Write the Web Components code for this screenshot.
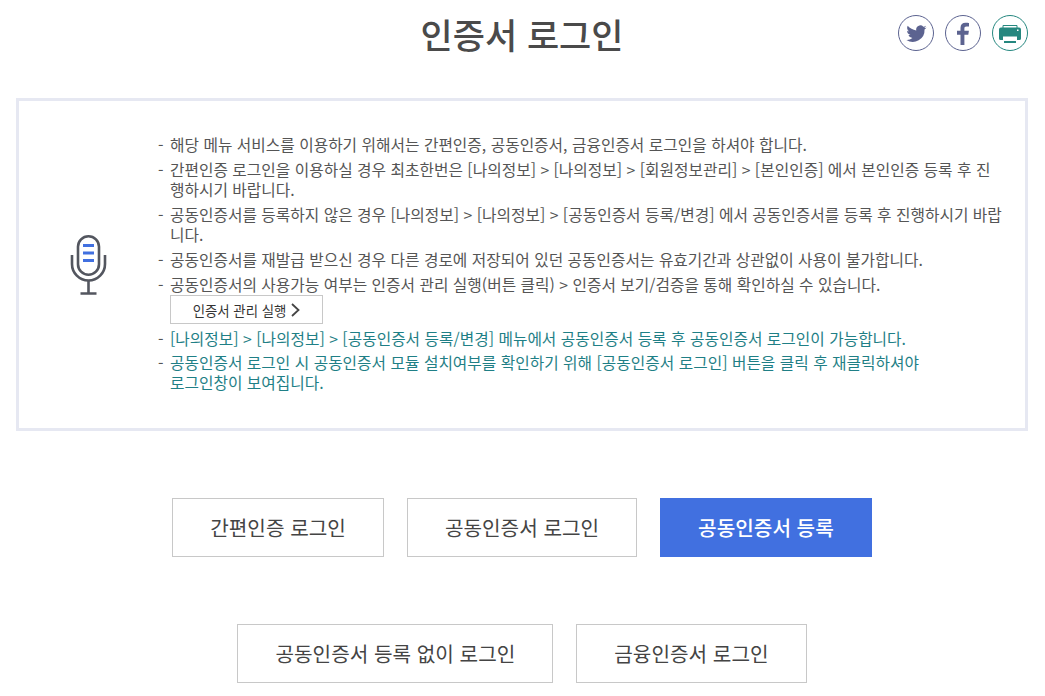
<!DOCTYPE html>
<html lang="ko">
<head>
<meta charset="utf-8">
<title>인증서 로그인</title>
<style>
html, body { margin: 0; padding: 0; background: #fff; overflow: hidden; }
body { font-family: "Noto Sans CJK KR", "Noto Sans", sans-serif; color: #555; }
</style>
</head>
<body>
<login-page>
  <page-header slot="header" title-text="인증서 로그인"></page-header>
  <notice-box slot="notice">
    <notice-item>해당 메뉴 서비스를 이용하기 위해서는 간편인증, 공동인증서, 금융인증서 로그인을 하셔야 합니다.</notice-item>
    <notice-item>간편인증 로그인을 이용하실 경우 최초한번은 [나의정보] &gt; [나의정보] &gt; [회원정보관리] &gt; [본인인증] 에서 본인인증 등록 후 진행하시기 바랍니다.</notice-item>
    <notice-item>공동인증서를 등록하지 않은 경우 [나의정보] &gt; [나의정보] &gt; [공동인증서 등록/변경] 에서 공동인증서를 등록 후 진행하시기 바랍니다.</notice-item>
    <notice-item>공동인증서를 재발급 받으신 경우 다른 경로에 저장되어 있던 공동인증서는 유효기간과 상관없이 사용이 불가합니다.</notice-item>
    <notice-item>공동인증서의 사용가능 여부는 인증서 관리 실행(버튼 클릭) &gt; 인증서 보기/검증을 통해 확인하실 수 있습니다.
      <manage-button>인증서 관리 실행</manage-button>
    </notice-item>
    <notice-item accent>[나의정보] &gt; [나의정보] &gt; [공동인증서 등록/변경] 메뉴에서 공동인증서 등록 후 공동인증서 로그인이 가능합니다.</notice-item>
    <notice-item accent narrow>공동인증서 로그인 시 공동인증서 모듈 설치여부를 확인하기 위해 [공동인증서 로그인] 버튼을 클릭 후 재클릭하셔야 로그인창이 보여집니다.</notice-item>
  </notice-box>
  <action-row slot="actions">
    <action-button>간편인증 로그인</action-button>
    <action-button>공동인증서 로그인</action-button>
    <action-button primary>공동인증서 등록</action-button>
  </action-row>
  <action-row slot="actions">
    <action-button>공동인증서 등록 없이 로그인</action-button>
    <action-button>금융인증서 로그인</action-button>
  </action-row>
</login-page>

<script>
function shadow(el, html) {
    el.attachShadow({ mode: "open" }).innerHTML = html;
}

class LoginPage extends HTMLElement {
    constructor() {
        super();
        shadow(this, `
        <style>
        :host { display: block; width: 1045px; height: 696px; box-sizing: border-box; padding: 0 17px 0 16px; }
        </style>
        <slot name="header"></slot>
        <slot name="notice"></slot>
        <slot name="actions"></slot>
        `);
    }
}

class PageHeader extends HTMLElement {
    constructor() {
        super();
        shadow(this, `
        <style>
        :host { display: block; position: relative; height: 98px; }
        h1 { margin: 0; padding-top: 9px; font-size: 35px; line-height: 50px; font-weight: 500; color: #4a4a4a; text-align: center; }
        .share { position: absolute; top: 15px; right: 0; display: flex; gap: 11px; }
        svg { display: block; width: 36px; height: 36px; }
        </style>
        <h1></h1>
        <div class="share">
          <svg viewBox="0 0 36 36"><circle cx="18" cy="18" r="17.5" fill="#fff" stroke="#5c6390"/>
            <path transform="translate(18.5 18) scale(.86) translate(-18.250 -17)" fill="#5c6390" d="M30 10.500c-.9.4-1.800.7-2.800.8 1-.6 1.800-1.500 2.100-2.700-1 .6-2 1-3.100 1.200a4.800 4.800 0 0 0-8.200 4.400C14 13.500 10.500 11.600 8 8.700c-1.300 2.200-.6 5 1.500 6.400-.8 0-1.500-.2-2.200-.6 0 2.300 1.600 4.300 3.900 4.800-.7.200-1.400.2-2.200.1.600 1.900 2.400 3.300 4.500 3.300A9.700 9.700 0 0 1 6.500 25 13.700 13.700 0 0 0 27.600 12.800c1-.6 1.800-1.400 2.400-2.300z"/></svg>
          <svg viewBox="0 0 36 36"><circle cx="18" cy="18" r="17.500" fill="#fff" stroke="#5c6390"/>
            <path fill="#5c6390" d="M15.500 30V19.800H12v-4.100h3.500v-3c0-3.300 2-5 5-5 1.500 0 3 .2 3.500.3v3.600h-2.500c-1.700 0-2.100.8-2.100 2v2.100h4.500l-.6 4.100h-3.900V30z"/></svg>
          <svg viewBox="0 0 36 36"><circle cx="18" cy="18" r="17.500" fill="#fff" stroke="#25877f"/>
            <path fill="none" stroke="#25877f" stroke-width="1" d="M11 14V10.500h14V14"/>
            <path fill="#25877f" d="M7 14.500a2 2 0 0 1 2-2h18a2 2 0 0 1 2 2v9a1.500 1.500 0 0 1-1.500 1.500H25v-3.500H11V25H8.500A1.500 1.500 0 0 1 7 23.500z"/>
            <path fill="#25877f" d="M12 26h12v2H12z"/>
            <path fill="#fff" d="M25 14.500h1.500V16H25z"/></svg>
        </div>
        `);
        this.shadowRoot.querySelector("h1").textContent = this.getAttribute("title-text");
    }
}

class NoticeBox extends HTMLElement {
    constructor() {
        super();
        shadow(this, `
        <style>
        :host { display: block; box-sizing: border-box; height: 333px; border: 3px solid #e6e8f2; }
        .wrap { display: grid; grid-template-columns: 139px 1fr; height: 100%; }
        .icon { display: flex; align-items: center; justify-content: center; }
        .icon svg { width: 37px; height: 60px; display: block; }
        .list { padding: 34px 22px 0 0; font-size: 15.75px; line-height: 20px; }
        </style>
        <div class="wrap">
          <div class="icon">
            <svg viewBox="0 0 37 60" fill="none" stroke="#53565f" stroke-width="2.600">
              <rect x="8" y="1.300" width="21" height="38.400" rx="10.500"/>
              <path d="M2 20v9a16.500 16.500 0 0 0 33 0V20"/>
              <path d="M18.500 46v12M10.500 58.500h16"/>
              <path stroke="#4170e0" stroke-width="3" d="M13 10.500h11M13 18h11M13 25.500h11"/>
            </svg>
          </div>
          <div class="list"><slot></slot></div>
        </div>
        `);
    }
}

class NoticeItem extends HTMLElement {
    constructor() {
        super();
        shadow(this, `
        <style>
        :host { display: block; position: relative; padding-left: 12px; margin-bottom: 5px; color: #555; word-break: break-all; }
        :host([accent]) { color: #1f7f86; margin-bottom: 4px; }
        :host([narrow]) { word-break: keep-all; max-width: 760px; }
        :host::before { content: "-"; position: absolute; left: 0; top: 0; color: #555; }
        </style>
        <slot></slot>
        `);
    }
}

class ManageButton extends HTMLElement {
    constructor() {
        super();
        shadow(this, `
        <style>
        :host { display: flex; align-items: center; justify-content: center; gap: 5px; box-sizing: border-box; width: 153px; height: 29px; margin-top: 0; margin-bottom: 5px; border: 1px solid #c8c8c8; font-size: 13.4px; color: #333; background: #fff; }
        svg { width: 9px; height: 14px; display: block; }
        </style>
        <slot></slot>
        <svg viewBox="0 0 9 14" fill="none" stroke="#444" stroke-width="1.800"><path d="M1 1l6.500 6L1 13"/></svg>
        `);
    }
}

class ActionRow extends HTMLElement {
    constructor() {
        super();
        shadow(this, `
        <style>
        :host { display: flex; justify-content: center; gap: 23px; margin-top: 67px; }
        </style>
        <slot></slot>
        `);
    }
}

class ActionButton extends HTMLElement {
    constructor() {
        super();
        shadow(this, `
        <style>
        :host { display: block; box-sizing: border-box; height: 59px; padding: 0 37px; border: 1px solid #c8c8c8; background: #fff; color: #444; font-size: 20.2px; line-height: 57px; white-space: nowrap; }
        :host([primary]) { background: #4170e0; border-color: #4170e0; color: #fff; font-weight: 500; }
        </style>
        <slot></slot>
        `);
    }
}

customElements.define("login-page", LoginPage);
customElements.define("page-header", PageHeader);
customElements.define("notice-box", NoticeBox);
customElements.define("notice-item", NoticeItem);
customElements.define("manage-button", ManageButton);
customElements.define("action-row", ActionRow);
customElements.define("action-button", ActionButton);
</script>
</body>
</html>
